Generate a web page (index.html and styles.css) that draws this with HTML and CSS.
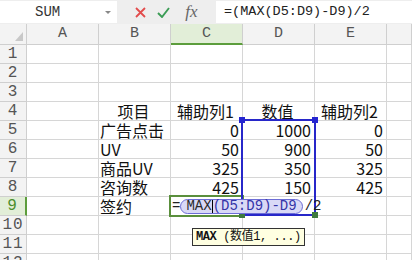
FILE: index.html
```html
<!DOCTYPE html>
<html lang="zh-CN">
<head>
  <meta charset="UTF-8" />
  <meta name="viewport" content="width=device-width, initial-scale=1" />
  <title>表格</title>
  <link rel="stylesheet" href="styles.css">
</head>
<body>
  <div class="fbar">
    <div class="namebox"><span>SUM</span><span class="dd"></span></div>
    <div class="tools">
      <span class="tool">
        <svg width="11" height="11" viewBox="0 0 11 11"><path d="M1 1 L10 10 M10 1 L1 10" stroke="#e24c4c" stroke-width="1.8" fill="none"/></svg>
      </span>
      <span class="tool">
        <svg width="13" height="11" viewBox="0 0 13 11"><path d="M1 6 L5 10 L12 1" stroke="#3b9c55" stroke-width="1.9" fill="none"/></svg>
      </span>
      <span class="tool fx">fx</span>
    </div>
    <div class="finput">=(MAX(D5:D9)-D9)/2</div>
  </div>

  <div class="sheet" id="sheet">
    <div class="range">
      <span class="handle tl"></span>
      <span class="handle tr"></span>
      <span class="handle bl"></span>
      <span class="handle br"></span>
    </div>
    <div class="active"></div>
    <div class="editor">
      <span>=</span>
      <span class="pill"><span class="fn">MAX</span><span class="caret"></span><span class="ref">(D5:D9)-D9</span></span>
      <span class="tail">/2</span>
    </div>
    <div class="tip"><b>MAX</b> (数值1, ...)</div>
  </div>

  <script>
    const sheet = document.getElementById("sheet");
    const cols = ["A", "B", "C", "D", "E", ""];

    // contenu des cellules : [texte, alignement]
    const data = {
      4: { B: ["项目", "c"], C: ["辅助列1", "c"], D: ["数值", "c"], E: ["辅助列2", "c"] },
      5: { B: ["广告点击"], C: ["0", "r"], D: ["1000", "r"], E: ["0", "r"] },
      6: { B: ["UV"], C: ["50", "r"], D: ["900", "r"], E: ["50", "r"] },
      7: { B: ["商品UV"], C: ["325", "r"], D: ["350", "r"], E: ["325", "r"] },
      8: { B: ["咨询数"], C: ["425", "r"], D: ["150", "r"], E: ["425", "r"] },
      9: { B: ["签约"] }
    };

    function addCell(cls, text){
      const cell = document.createElement("div");
      cell.className = cls;
      if(text) cell.textContent = text;
      sheet.appendChild(cell);
    }

    addCell("hd corner");
    cols.forEach(c => addCell(c === "C" ? "hd col sel" : "hd col", c));

    for(let r = 1; r <= 12; r++){
      addCell(r === 9 ? "hd row sel" : "hd row", String(r));
      cols.forEach(c => {
        const v = (data[r] && data[r][c]) || null;
        addCell(v && v[1] ? "cell " + v[1] : "cell", v ? v[0] : "");
      });
    }
  </script>
</body>
</html>
```

FILE: styles.css
```css
body {
  margin: 0;
  width: 412px;
  height: 260px;
  overflow: hidden;
  background: #fff;
  font-family: "Noto Sans CJK SC", sans-serif;
  color: #111;
}
.fbar {
  height: 24px;
  display: flex;
  align-items: flex-start;
  background: #eeeeee;
}
.namebox {
  width: 117px;
  height: 22px;
  margin-top: 1px;
  box-sizing: border-box;
  background: #fff;
  display: flex;
  align-items: center;
  padding: 0 6px 0 35px;
  font-family: "Liberation Mono", monospace;
  font-size: 14px;
  color: #333;
}
.dd {
  margin-left: auto;
  width: 0;
  height: 0;
  border-left: 3px solid transparent;
  border-right: 3px solid transparent;
  border-top: 3px solid #888;
}
.tools {
  width: 99px;
  height: 24px;
  box-sizing: border-box;
  padding-left: 12px;
  display: flex;
  align-items: center;
}
.tool {
  width: 23px;
  display: flex;
  justify-content: center;
  align-items: center;
}
.fx {
  width: 25px;
  padding-left: 4px;
  font-family: "Liberation Serif", serif;
  font-style: italic;
  font-size: 17px;
  color: #666;
}
.finput {
  flex: 1;
  height: 22px;
  margin-top: 1px;
  background: #fff;
  padding-left: 8px;
  font-family: "Liberation Mono", monospace;
  font-size: 13.5px;
  line-height: 22px;
  color: #222;
}
.sheet {
  position: relative;
  display: grid;
  grid-template-columns: 27px repeat(5, 72px) 25px;
  grid-template-rows: 21px;
  grid-auto-rows: 19px;
}
.hd, .cell {
  box-sizing: border-box;
  border-right: 1px solid #d6d6d6;
  border-bottom: 1px solid #d6d6d6;
  white-space: nowrap;
}
.hd {
  background: #f3f3f3;
  border-color: #cfcfcf;
  color: #555;
  font-family: "Liberation Mono", monospace;
  font-size: 15px;
  text-align: center;
  line-height: 19px;
}
.hd.col {
  line-height: 20px;
}
.hd.row {
  font-size: 16px;
  letter-spacing: 1px;
  line-height: 18px;
}
.hd.col.sel {
  background: #e2eed8;
  border-bottom: 2px solid #5c9d3c;
}
.hd.row.sel {
  background: #e2eed8;
  color: #4c8f2c;
  border-right: 2px solid #5c9d3c;
}
.corner {
  position: relative;
}
.corner::after {
  content: "";
  position: absolute;
  right: 3px;
  bottom: 3px;
  border-left: 8px solid transparent;
  border-bottom: 9px solid #c8c8c8;
}
.cell {
  font-size: 16px;
  line-height: 18px;
  padding: 0 3px 0 1px;
}
.cell.c {
  text-align: center;
}
.cell.r {
  text-align: right;
}

/* overlays de l'édition en cours */
.range {
  position: absolute;
  left: 241px;
  top: 95px;
  width: 75px;
  height: 97px;
  box-sizing: border-box;
  border: 2px solid #2727c9;
  z-index: 2;
}
.handle {
  position: absolute;
  width: 6px;
  height: 6px;
  background: #2525d0;
}
.handle.tl { left: -4px; top: -4px; }
.handle.tr { right: -4px; top: -4px; }
.handle.bl { left: -4px; bottom: -4px; background: #3e7a3e; }
.handle.br { right: -4px; bottom: -4px; background: #3e7a3e; }
.active {
  position: absolute;
  left: 169px;
  top: 171px;
  width: 75px;
  height: 22px;
  box-sizing: border-box;
  border: 2px solid #5a8f3c;
  z-index: 1;
}
.editor {
  position: absolute;
  left: 172px;
  top: 175px;
  display: flex;
  align-items: center;
  font-family: "Liberation Mono", monospace;
  font-size: 14px;
  line-height: 13px;
  color: #222;
  z-index: 3;
}
.pill {
  display: flex;
  align-items: center;
  padding: 0 5px;
  border: 1px solid #6d6dd6;
  border-radius: 8px;
  background: #d9d9f6;
}
.fn {
  color: #2a2a2a;
}
.caret {
  width: 1px;
  height: 13px;
  background: #000;
}
.ref {
  color: #3434a8;
}
.tail {
  margin-left: 2px;
}
.tip {
  position: absolute;
  left: 192px;
  top: 204px;
  height: 18px;
  box-sizing: border-box;
  padding: 0 3px;
  background: #ffffe1;
  border: 1px solid #333;
  font-family: "Liberation Mono", "Noto Sans CJK SC", monospace;
  font-size: 12px;
  letter-spacing: -0.4px;
  line-height: 16px;
  white-space: nowrap;
  z-index: 3;
}
```
